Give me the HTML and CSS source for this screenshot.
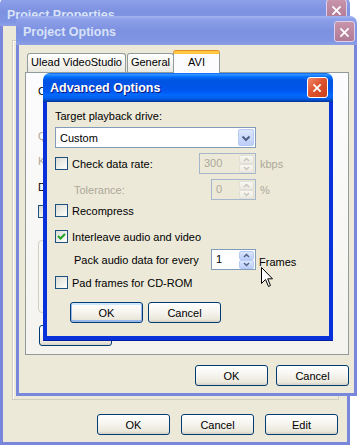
FILE: index.html
```html
<!DOCTYPE html>
<html lang="en">
<head>
    <meta charset="UTF-8">
    <title>Advanced Options</title>
    <link rel="stylesheet" href="styles.css">
</head>
<body>

<!-- back window: Project Properties -->
<div class="win inactive props-win">
    <div class="titlebar">
        <span class="title">Project Properties</span>
        <span class="close"><svg width="21" height="21" viewBox="0 0 21 21"><path d="M6 6 L15 15 M15 6 L6 15" stroke="#fff" stroke-width="2"/></svg></span>
    </div>
    <div class="win-body">
        <div class="frame"></div>
        <div class="btn-row props-btns">
            <button class="btn">OK</button>
            <button class="btn">Cancel</button>
            <button class="btn">Edit</button>
        </div>
    </div>
</div>

<!-- middle window: Project Options -->
<div class="win inactive options-win">
    <div class="titlebar">
        <span class="title">Project Options</span>
        <span class="close"><svg width="21" height="21" viewBox="0 0 21 21"><path d="M6 6 L15 15 M15 6 L6 15" stroke="#fff" stroke-width="2"/></svg></span>
    </div>
    <div class="win-body">
        <div class="tabs">
            <div class="tab tab-ulead">Ulead VideoStudio</div>
            <div class="tab tab-general">General</div>
            <div class="tab tab-avi active">AVI</div>
        </div>
        <!-- only the left edge of this page peeks out from behind Advanced Options -->
        <div class="tab-panel">
            <div class="avi-line avi-compress">C</div>
            <div class="avi-line avi-quality grey">Q</div>
            <div class="avi-line avi-key grey">K</div>
            <div class="avi-line avi-data">D</div>
            <div class="avi-check"><span class="cb cb-off"></span></div>
            <div class="groupbox"></div>
            <button class="btn avi-adv"></button>
        </div>
        <div class="btn-row options-btns">
            <button class="btn">OK</button>
            <button class="btn">Cancel</button>
        </div>
    </div>
</div>

<!-- front window: Advanced Options -->
<div class="win active adv-win">
    <div class="titlebar">
        <span class="title">Advanced Options</span>
        <span class="close"><svg width="21" height="21" viewBox="0 0 21 21"><path d="M6 6 L14 14 M14 6 L6 14" stroke="#fff" stroke-width="2"/></svg></span>
    </div>
    <div class="win-body adv-body">
        <div class="field-label">Target playback drive:</div>
        <div class="select">
            <span class="select-val">Custom</span>
            <span class="drop"><svg width="14" height="16" viewBox="0 0 14 16"><polyline points="3.5,6.5 7,10 10.5,6.5" fill="none" stroke="#4d6185" stroke-width="2"/></svg></span>
        </div>

        <div class="opt-row rate-row">
            <div class="opt-left rate-left"><span class="cb"></span>Check data rate:</div>
            <div class="spin disabled rate-spin">
                <span class="val">300</span>
                <span class="arrows">
                    <span class="arr"><svg width="13" height="7" viewBox="0 0 13 7"><polyline points="4,5 6.5,2.5 9,5" fill="none" stroke="#c9c7ba" stroke-width="1.5"/></svg></span>
                    <span class="arr"><svg width="13" height="7" viewBox="0 0 13 7"><polyline points="4,2 6.5,4.5 9,2" fill="none" stroke="#c9c7ba" stroke-width="1.5"/></svg></span>
                </span>
            </div>
            <span class="unit grey">kbps</span>
        </div>

        <div class="opt-row tol-row">
            <div class="opt-left sub-left grey">Tolerance:</div>
            <div class="spin disabled small-spin">
                <span class="val">0</span>
                <span class="arrows">
                    <span class="arr"><svg width="13" height="7" viewBox="0 0 13 7"><polyline points="4,5 6.5,2.5 9,5" fill="none" stroke="#c9c7ba" stroke-width="1.5"/></svg></span>
                    <span class="arr"><svg width="13" height="7" viewBox="0 0 13 7"><polyline points="4,2 6.5,4.5 9,2" fill="none" stroke="#c9c7ba" stroke-width="1.5"/></svg></span>
                </span>
            </div>
            <span class="unit grey">%</span>
        </div>

        <div class="opt-row recompress-row">
            <div class="opt-left"><span class="cb"></span>Recompress</div>
        </div>

        <div class="opt-row interleave-row">
            <div class="opt-left"><span class="cb"><svg width="11" height="11" viewBox="0 0 11 11"><polyline points="2,5 4.5,7.5 9,3" fill="none" stroke="#21a121" stroke-width="2"/></svg></span>Interleave audio and video</div>
        </div>

        <div class="opt-row pack-row">
            <div class="opt-left sub-left">Pack audio data for every</div>
            <div class="spin small-spin">
                <span class="val">1</span>
                <span class="arrows">
                    <span class="arr"><svg width="13" height="7" viewBox="0 0 13 7"><polyline points="4,5 6.5,2.5 9,5" fill="none" stroke="#4d6185" stroke-width="1.5"/></svg></span>
                    <span class="arr"><svg width="13" height="7" viewBox="0 0 13 7"><polyline points="4,2 6.5,4.5 9,2" fill="none" stroke="#4d6185" stroke-width="1.5"/></svg></span>
                </span>
            </div>
            <span class="unit frames">Frames</span>
        </div>

        <div class="opt-row pad-row">
            <div class="opt-left"><span class="cb"></span>Pad frames for CD-ROM</div>
        </div>

        <div class="btn-row adv-btns">
            <button class="btn default">OK</button>
            <button class="btn">Cancel</button>
        </div>
    </div>
</div>

<!-- mouse pointer -->
<svg class="cursor" width="13" height="21" viewBox="0 0 13 21">
    <path d="M0.5 0.5 L0.5 16.5 L4.5 12.5 L7.5 19.5 L9.5 18.5 L6.7 11.8 L11.5 11.8 Z" fill="#fff" stroke="#000" stroke-width="1"/>
</svg>

</body>
</html>
```

FILE: styles.css
```css
* {
    box-sizing: border-box;
}
body {
    margin: 0;
    width: 361px;
    height: 448px;
    overflow: hidden;
    position: relative;
    background: #fff;
    font-family: "Liberation Sans", Arial, sans-serif;
    font-size: 11px;
    color: #000;
}

/* windows */
.win {
    position: absolute;
    display: flex;
    flex-direction: column;
}
.props-win {
    left: 0;
    top: -3px;
    width: 350px;
    height: 448px;
}
.options-win {
    left: 16px;
    top: 16px;
    width: 341px;
    height: 380px;
}
.adv-win {
    left: 43px;
    top: 73px;
    width: 290px;
    height: 267px;
}

.titlebar {
    height: 29px;
    flex: 0 0 29px;
    display: flex;
    align-items: flex-start;
    border-radius: 7px 7px 0 0;
    padding-left: 7px;
}
.title {
    font-weight: bold;
    font-size: 12.5px;
    line-height: 15px;
    margin-top: 9px;
}
.close {
    margin-left: auto;
    width: 21px;
    height: 21px;
    border-radius: 3px;
    display: flex;
}
.props-win .title {
    margin-top: 11px;
}
.props-win .close {
    margin-top: 2px;
    margin-right: 3px;
}
.options-win .close {
    margin-top: 5px;
    margin-right: 2px;
}
.adv-win .close {
    margin-top: 4px;
    margin-right: 5px;
}
.adv-win .title {
    margin-top: 8px;
}

.inactive .titlebar {
    background: linear-gradient(#a3b3f0 0%, #8c9fe8 12%, #7d91e1 50%, #7f95e3 85%, #8da0e6 100%);
}
.inactive .title {
    color: #d8e2f8;
}
.inactive .close {
    background: linear-gradient(#c894aa, #b07a95);
    border: 1px solid #dcd0ea;
}
.inactive .win-body {
    border: 3px solid #7886dc;
    border-top: none;
}

.active .titlebar {
    background: linear-gradient(#0058ee 0%, #3593ff 4%, #288eff 7%, #127dff 10%, #036ffc 14%, #0262ee 18%, #0057e5 24%, #0054e3 30%, #0055eb 56%, #005bf5 66%, #026afe 76%, #0062ef 86%, #0052d6 92%, #0040ab 97%, #003092 100%);
}
.active .title {
    color: #fff;
    text-shadow: 1px 1px #0a1883;
}
.active .close {
    background: linear-gradient(135deg, #f08a6c, #e0542f 45%, #c9401c);
    border: 1px solid #fff;
}
.active .win-body {
    border: 4px solid #0831d9;
    border-top: none;
    box-shadow: 0 1px 0 #001ea0;
}

.win-body {
    flex: 1;
    background: #ece9d8;
    display: flex;
    flex-direction: column;
}

/* buttons */
.btn {
    width: 73px;
    height: 21px;
    border: 1px solid #003c74;
    border-radius: 3px;
    background: linear-gradient(#ffffff, #f6f5f0 45%, #ebe8dc 85%, #d6d0c5);
    font-family: inherit;
    font-size: 11px;
    color: #000;
    padding: 0;
}
.btn.default {
    box-shadow: inset 0 -1px 0 1px #98b8ea, inset 0 1px 0 1px #cee7ff;
}
.btn-row {
    display: flex;
    justify-content: flex-end;
}

/* Project Properties */
.props-win .win-body {
    padding: 0 8px 0 9px;
}
.frame {
    margin-top: 14px;
    height: 360px;
    border: 1px solid #d0cebf;
    box-shadow: inset 1px 1px #fff;
}
.props-btns {
    margin-top: 14px;
    margin-right: 1px;
    gap: 11px;
}

/* Project Options */
.options-win .win-body {
    padding: 0 5px 0 6px;
}
.tabs {
    margin-top: 6px;
    height: 21px;
    display: flex;
    align-items: flex-end;
    padding-left: 2px;
    position: relative;
    z-index: 1;
}
.tab {
    height: 19px;
    border: 1px solid #919b9c;
    border-bottom: none;
    border-radius: 3px 3px 0 0;
    background: linear-gradient(#ffffff, #f3f2ec 60%, #e9e8e0);
    text-align: center;
    line-height: 17px;
}
.tab-ulead {
    width: 99px;
}
.tab-general {
    width: 47px;
    margin-left: 1px;
}
.tab-avi {
    width: 47px;
    margin-left: -1px;
}
.tab.active {
    height: 22px;
    margin-bottom: -1px;
    background: #fcfcfe;
    border-top: 3px solid #ffc83c;
    box-shadow: 0 -1px 0 #e68b2c;
    line-height: 17px;
}
.tab-panel {
    height: 283px;
    border: 1px solid #919b9c;
    background: linear-gradient(#fcfcfe, #f4f3ee);
    padding: 12px 0 0 12px;
    display: flex;
    flex-direction: column;
    align-items: flex-start;
}
.avi-line {
    line-height: 13px;
}
.avi-quality {
    margin-top: 32px;
}
.avi-key {
    margin-top: 12px;
}
.avi-data {
    margin-top: 13px;
}
.avi-check {
    margin-top: 11px;
    display: flex;
}
.cb-off {
    border-color: #c9c7ba;
    background: #fff;
}
.groupbox {
    margin-top: 22px;
    width: 280px;
    height: 73px;
    border: 1px solid #d0d0bf;
    border-radius: 4px;
}
.avi-adv {
    margin-top: 12px;
    margin-left: 1px;
}
.options-btns {
    margin-top: 10px;
    gap: 8px;
}

/* Advanced Options */
.adv-body {
    padding: 8px 0 0 8px;
}
.field-label {
    line-height: 13px;
}
.select {
    margin-top: 4px;
    width: 201px;
    height: 21px;
    border: 1px solid #7f9db9;
    background: #fff;
    display: flex;
    align-items: center;
    padding: 1px;
}
.select-val {
    padding-left: 3px;
}
.drop {
    margin-left: auto;
    width: 16px;
    height: 17px;
    border-radius: 2px;
    border: 1px solid #b8cbf5;
    background: linear-gradient(#dbe6fe, #bccffa);
    display: flex;
    align-items: center;
    justify-content: center;
}

.opt-row {
    height: 21px;
    display: flex;
    align-items: center;
}
.opt-left {
    display: flex;
    align-items: center;
}
.rate-left {
    width: 144px;
}
.sub-left {
    width: 156px;
    padding-left: 19px;
}
.rate-row,
.tol-row {
    margin-top: 5px;
}
.interleave-row {
    margin-top: 5px;
}
.pack-row {
    margin-top: 2px;
}
.pad-row {
    margin-top: 2px;
}

.cb {
    width: 13px;
    height: 13px;
    flex: 0 0 13px;
    border: 1px solid #1c5180;
    background: linear-gradient(135deg, #dcdcd7, #f4f4f0 70%, #fff);
    margin-right: 4px;
    display: flex;
}

.spin {
    height: 21px;
    border: 1px solid #7f9db9;
    background: #fff;
    display: flex;
    padding: 1px;
}
.rate-spin {
    width: 57px;
}
.small-spin {
    width: 45px;
}
.spin .val {
    flex: 1;
    padding-left: 3px;
    line-height: 17px;
}
.arrows {
    width: 15px;
    display: flex;
    flex-direction: column;
}
.arr {
    flex: 1;
    border-radius: 2px;
    border: 1px solid #b8cbf5;
    background: linear-gradient(#dbe6fe, #bccffa);
    display: flex;
    align-items: center;
    justify-content: center;
}
.spin.disabled {
    border-color: #a6b7cc;
    background: #ece9d8;
    color: #aca899;
}
.spin.disabled .arr {
    border-color: #e2e0d6;
    background: linear-gradient(#f8f8f4, #ebe9e0);
}
.unit {
    margin-left: 4px;
}
.frames {
    margin-top: 4px;
    margin-left: 3px;
}
.grey {
    color: #aca899;
}

.adv-btns {
    margin-top: 9px;
    padding-left: 15px;
    justify-content: flex-start;
    gap: 5px;
}

.cursor {
    position: absolute;
    left: 261px;
    top: 267px;
}
```
